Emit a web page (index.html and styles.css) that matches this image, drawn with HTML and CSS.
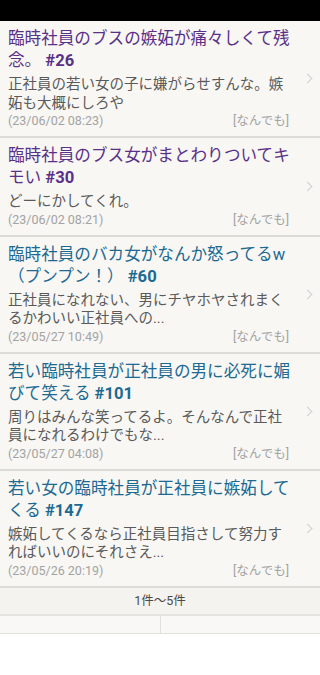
FILE: index.html
```html
<!DOCTYPE html>
<html lang="ja">
<head>
<meta charset="utf-8">
<link rel="stylesheet" href="styles.css">
</head>
<body>
<div class="statusbar"></div>
<ul class="list">
  <li class="item">
    <div class="main">
      <div class="title visited">臨時社員のブスの嫉妬が痛々しくて残念。 <b>#26</b></div>
      <div class="body">正社員の若い女の子に嫌がらせすんな。嫉妬も大概にしろや</div>
      <div class="meta"><span>(23/06/02 08:23)</span><span>[なんでも]</span></div>
    </div>
    <span class="chev"></span>
  </li>
  <li class="item">
    <div class="main">
      <div class="title visited">臨時社員のブス女がまとわりついてキモい <b>#30</b></div>
      <div class="body">どーにかしてくれ。</div>
      <div class="meta"><span>(23/06/02 08:21)</span><span>[なんでも]</span></div>
    </div>
    <span class="chev"></span>
  </li>
  <li class="item">
    <div class="main">
      <div class="title">臨時社員のバカ女がなんか怒ってるw（プンプン！） <b>#60</b></div>
      <div class="body">正社員になれない、男にチヤホヤされまくるかわいい正社員への...</div>
      <div class="meta"><span>(23/05/27 10:49)</span><span>[なんでも]</span></div>
    </div>
    <span class="chev"></span>
  </li>
  <li class="item">
    <div class="main">
      <div class="title">若い臨時社員が正社員の男に必死に媚びて笑える <b>#101</b></div>
      <div class="body">周りはみんな笑ってるよ。そんなんで正社員になれるわけでもな...</div>
      <div class="meta"><span>(23/05/27 04:08)</span><span>[なんでも]</span></div>
    </div>
    <span class="chev"></span>
  </li>
  <li class="item">
    <div class="main">
      <div class="title">若い女の臨時社員が正社員に嫉妬してくる <b>#147</b></div>
      <div class="body">嫉妬してくるなら正社員目指さして努力すればいいのにそれさえ...</div>
      <div class="meta"><span>(23/05/26 20:19)</span><span>[なんでも]</span></div>
    </div>
    <span class="chev"></span>
  </li>
</ul>
<div class="count">1件～5件</div>
<div class="pager">
  <div class="cell"></div>
  <div class="cell"></div>
</div>
</body>
</html>
```

FILE: styles.css
```css
html, body {
  margin: 0;
  padding: 0;
  background: #ffffff;
  font-family: Roboto, "Noto Sans CJK JP", sans-serif;
}
.statusbar {
  height: 21px;
  background: #000;
}
.list {
  list-style: none;
  margin: 0;
  padding: 0;
  background: #f8f7f4;
}
.item {
  display: flex;
  align-items: center;
  border-bottom: 2px solid #dddbd7;
  padding: 7px 0 7px 8px;
}
.main {
  width: 286px;
  flex: none;
}
.title {
  font-size: 16.6px;
  line-height: 22px;
  color: #1c6a92;
}
.title.visited {
  color: #5a3188;
}
.title b {
  font-weight: bold;
  line-height: 22px;
}
.body {
  margin-top: 4px;
  font-size: 14.5px;
  line-height: 18.5px;
  color: #5a5a5a;
}
.meta {
  display: flex;
  justify-content: space-between;
  font-size: 12.5px;
  line-height: 16px;
  color: #a3a3a3;
  padding-right: 5px;
}
.chev {
  width: 6px;
  height: 6px;
  border-top: 1.5px solid #cfcfcf;
  border-right: 1.5px solid #cfcfcf;
  transform: rotate(45deg);
  margin-left: 10px;
}
.count {
  height: 26px;
  line-height: 26px;
  text-align: center;
  font-size: 12.5px;
  color: #4a4a4a;
  background: #f4f3f0;
  border-bottom: 2px solid #e6e4e0;
}
.pager {
  display: flex;
  height: 17px;
  background: #f9f8f6;
  border-bottom: 1px solid #e2e0dc;
}
.cell {
  flex: 1;
}
.cell + .cell {
  border-left: 1px solid #e2e0dc;
}
```
